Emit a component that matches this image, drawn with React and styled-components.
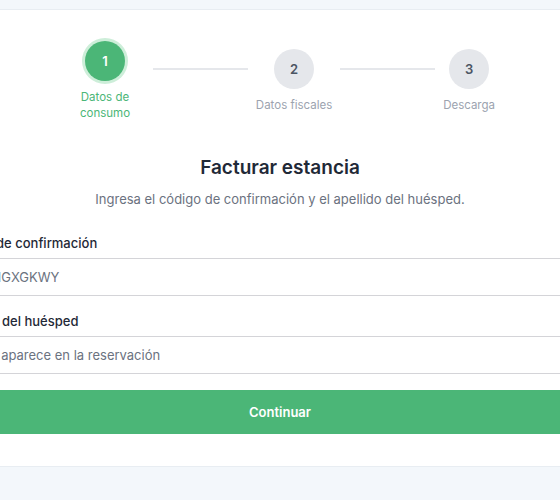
import styled, { createGlobalStyle } from "styled-components";

const GlobalStyle = createGlobalStyle`
  * { box-sizing: border-box; }
  body {
    margin: 0;
    background: #f3f7fb;
    font-family: Inter, "Noto Sans", Arial, sans-serif;
    overflow: hidden;
  }
`;

const Page = styled.div`
  display: flex;
  justify-content: center;
  padding-top: 9px;
  min-height: 500px;
  overflow: hidden;
`;

const Card = styled.div`
  flex: none;
  width: 664px;
  background: #ffffff;
  border-top: 1px solid #e8edf2;
  border-bottom: 1px solid #e8edf2;
  padding: 31px 0 32px;
  height: 458px;
`;

const Stepper = styled.div`
  width: 430px;
  margin: 0 auto;
  display: flex;
  align-items: center;
`;

const Step = styled.div`
  display: flex;
  flex-direction: column;
  align-items: center;
  max-width: 80px;
  flex: none;
`;

const Circle = styled.div`
  width: 40px;
  height: 40px;
  border-radius: 50%;
  display: flex;
  align-items: center;
  justify-content: center;
  font-size: 13px;
  font-weight: 600;
  background: ${(p) => (p.$active ? "#4bb677" : "#e5e7eb")};
  color: ${(p) => (p.$active ? "#ffffff" : "#4b5563")};
  box-shadow: ${(p) => (p.$active ? "0 0 0 3px #cdeed9" : "none")};
`;

const StepLabel = styled.div`
  margin-top: 8px;
  font-size: 11.5px;
  line-height: 16px;
  text-align: center;
  color: ${(p) => (p.$active ? "#4bb677" : "#9ca3af")};
`;

const Connector = styled.div`
  flex: 1;
  height: 2px;
  background: #e5e7eb;
  margin: 0 8px 24px;
`;

const Title = styled.h2`
  margin: 33px 0 0;
  text-align: center;
  font-size: 19px;
  line-height: 28px;
  font-weight: 600;
  color: #1f2937;
`;

const Subtitle = styled.p`
  margin: 7px 0 0;
  text-align: center;
  font-size: 13px;
  line-height: 20px;
  color: #6b7280;
`;

const Form = styled.div`
  margin-top: 25px;
  display: flex;
  flex-direction: column;
  gap: 16px;
`;

const Field = styled.div`
  display: flex;
  flex-direction: column;
  gap: 6px;
`;

const Label = styled.label`
  font-size: 13px;
  line-height: 18px;
  font-weight: 500;
  color: #1f2937;
`;

const Input = styled.input`
  height: 38px;
  border: 1px solid #d4d4d8;
  border-radius: 6px;
  padding: 0 12px;
  font-family: inherit;
  font-size: 13px;
  color: #1f2937;
  outline: none;
  &::placeholder {
    color: #6b7280;
  }
`;

const Button = styled.button`
  height: 44px;
  border: none;
  border-radius: 6px;
  background: #4bb677;
  color: #ffffff;
  font-family: inherit;
  font-size: 13px;
  font-weight: 600;
  cursor: pointer;
`;

const steps = [
  { n: 1, label: "Datos de consumo", active: true },
  { n: 2, label: "Datos fiscales" },
  { n: 3, label: "Descarga" },
];

export default function App() {
  return (
    <>
      <GlobalStyle />
      <Page>
        <Card>
          <Stepper>
            {steps.map((s, i) => [
              i > 0 && <Connector key={"c" + s.n} />,
              <Step key={s.n}>
                <Circle $active={s.active}>{s.n}</Circle>
                <StepLabel $active={s.active}>{s.label}</StepLabel>
              </Step>,
            ])}
          </Stepper>
          <Title>Facturar estancia</Title>
          <Subtitle>
            Ingresa el código de confirmación y el apellido del huésped.
          </Subtitle>
          <Form>
            <Field>
              <Label>Código de confirmación</Label>
              <Input placeholder="Ej. AOIGXGKWY" />
            </Field>
            <Field>
              <Label>Apellido del huésped</Label>
              <Input placeholder="Como aparece en la reservación" />
            </Field>
            <Button>Continuar</Button>
          </Form>
        </Card>
      </Page>
    </>
  );
}
